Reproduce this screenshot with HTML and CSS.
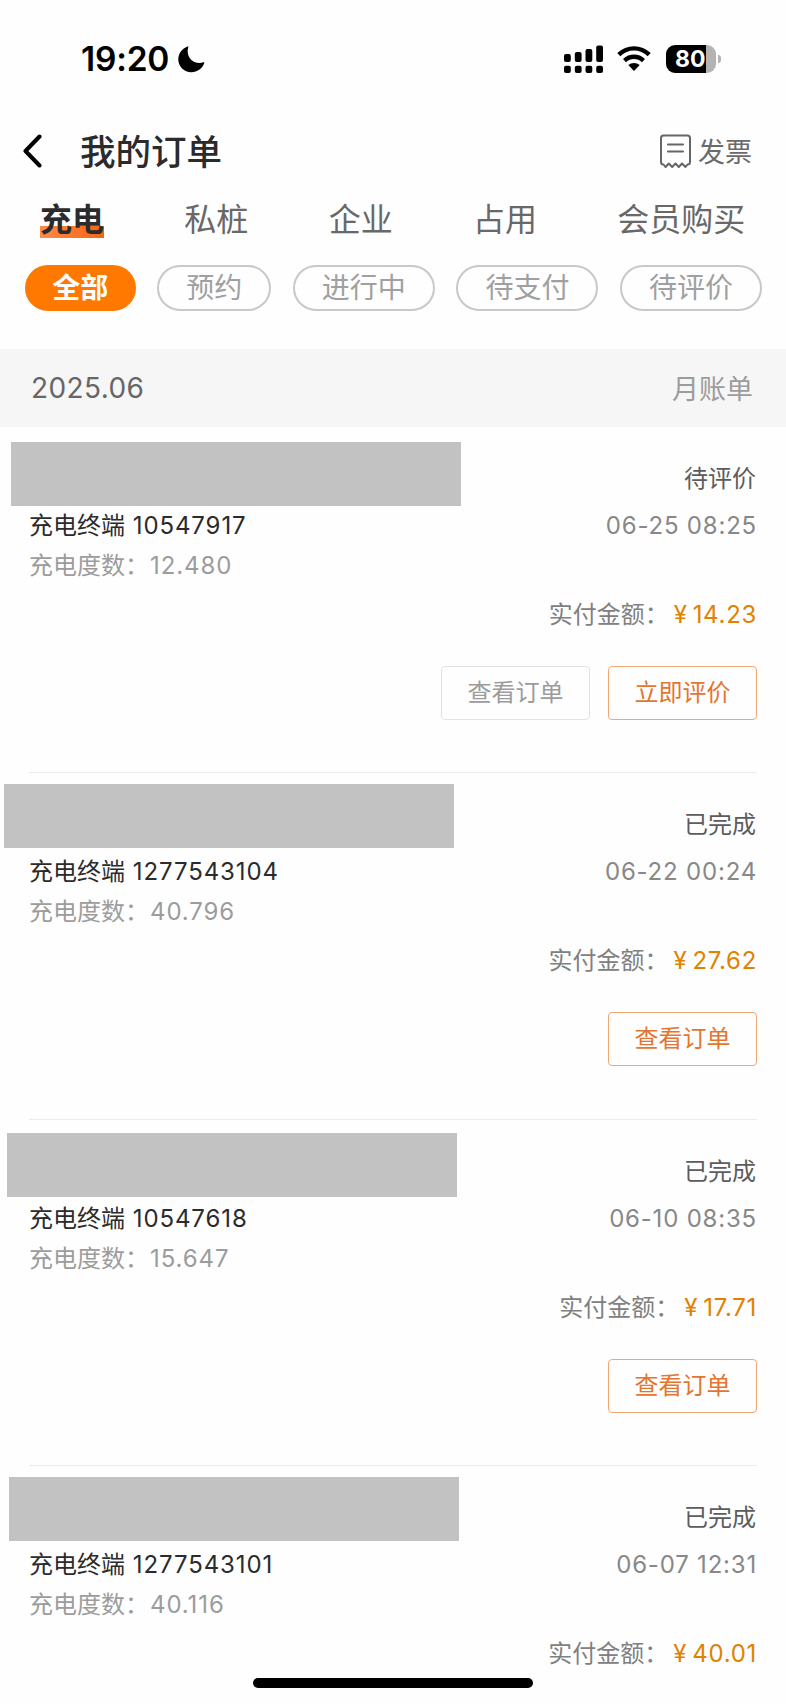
FILE: index.html
```html
<!DOCTYPE html>
<html lang="zh-CN">
<head>
    <meta charset="UTF-8">
    <meta name="viewport" content="width=device-width, initial-scale=1.0">
    <title>我的订单</title>
    <link rel="stylesheet" href="styles.css">
</head>
<body>

    <div class="status-bar">
        <span class="time">19:20</span>
        <svg class="moon" width="27" height="27" viewBox="0 0 27 27">
            <path d="M9.6 .4C9.9 0 10.5.2 10.3.9C7.2 10.8 15.5 19.2 25.4 16.3C26.2 16.1 26.5 16.6 26.2 17.3C24.2 22.8 19.2 26.3 13.4 26.3C6 26.3.3 20.6.3 13.3C.3 7.4 4 2.400 9.6.4Z"/>
        </svg>
        <svg class="signal" width="40" height="29" viewBox="0 0 40 29">
            <rect x="0" y="9" width="6.800" height="8" rx="2"/>
            <rect x="10.800" y="7" width="6.800" height="10" rx="2"/>
            <rect x="21.500" y="4" width="6.800" height="13" rx="2"/>
            <rect x="32.200" y="0.500" width="6.800" height="16.500" rx="2"/>
            <rect x="0" y="20.800" width="6.800" height="7.200" rx="2"/>
            <rect x="10.800" y="20.800" width="6.800" height="7.200" rx="2"/>
            <rect x="21.500" y="20.800" width="6.800" height="7.200" rx="2"/>
            <rect x="32.200" y="20.800" width="6.800" height="7.200" rx="2"/>
        </svg>
        <svg class="wifi" width="34" height="26" viewBox="0 0 34 26">
            <path d="M1.800 8.700C10.500.3 23.500.3 32.200 8.700" fill="none" stroke="#000" stroke-width="4.400"/>
            <path d="M7.500 14.600C13 9.500 21 9.500 26.500 14.600" fill="none" stroke="#000" stroke-width="4.400"/>
            <path d="M11.300 19C14.600 16.200 19.400 16.200 22.700 19L17.500 24.600Q17 25.100 16.500 24.600Z"/>
        </svg>
        <div class="battery"><span>80</span></div>
        <div class="battery-tip"></div>
    </div>

    <div class="nav">
        <svg class="back" width="20" height="34" viewBox="0 0 20 34">
            <path d="M16.500 2.500L2.500 17L16.500 31.500" fill="none" stroke="#000" stroke-width="4" stroke-linecap="round" stroke-linejoin="round"/>
        </svg>
        <h1>我的订单</h1>
        <svg class="invoice-icon" width="32" height="35" viewBox="0 0 32 35" fill="none" stroke="#666" stroke-width="2" stroke-linejoin="round" stroke-linecap="round">
            <path d="M3.500 30.500Q1 30.500 1 28V4Q1 1.500 3.500 1.500H27.500Q30 1.500 30 4V28Q30 30.500 27.500 30.500L25.500 33L22 29.500L18.800 33L15.500 29.500L12.200 33L8.800 29.500L5.500 33Z"/>
            <path d="M8 10.500H23M8 17.500H23" stroke-width="2.200"/>
        </svg>
        <span class="invoice">发票</span>
    </div>

    <div class="tabs">
        <span class="tab active">充电</span>
        <span class="tab">私桩</span>
        <span class="tab">企业</span>
        <span class="tab">占用</span>
        <span class="tab">会员购买</span>
    </div>

    <div class="filters">
        <span class="pill active">全部</span>
        <span class="pill">预约</span>
        <span class="pill">进行中</span>
        <span class="pill">待支付</span>
        <span class="pill">待评价</span>
    </div>

    <div class="month">
        <span class="month-date">2025.06</span>
        <span class="month-bill">月账单</span>
    </div>

    <div class="orders">
        <div class="order first">
            <div class="order-head"><div class="station"></div><span class="state">待评价</span></div>
            <div class="row terminal"><span>充电终端 <b>10547917</b></span><span class="date">06-25 08:25</span></div>
            <div class="degrees">充电度数：<b>12.480</b></div>
            <div class="amount">实付金额：<span class="price"><i>¥</i>14.23</span></div>
            <div class="buttons"><span class="btn">查看订单</span><span class="btn orange">立即评价</span></div>
        </div>
        <div class="order second">
            <div class="order-head"><div class="station"></div><span class="state">已完成</span></div>
            <div class="row terminal"><span>充电终端 <b>1277543104</b></span><span class="date">06-22 00:24</span></div>
            <div class="degrees">充电度数：<b>40.796</b></div>
            <div class="amount">实付金额：<span class="price"><i>¥</i>27.62</span></div>
            <div class="buttons"><span class="btn orange">查看订单</span></div>
        </div>
        <div class="order third">
            <div class="order-head"><div class="station"></div><span class="state">已完成</span></div>
            <div class="row terminal"><span>充电终端 <b>10547618</b></span><span class="date">06-10 08:35</span></div>
            <div class="degrees">充电度数：<b>15.647</b></div>
            <div class="amount">实付金额：<span class="price"><i>¥</i>17.71</span></div>
            <div class="buttons"><span class="btn orange">查看订单</span></div>
        </div>
        <div class="order fourth">
            <div class="order-head"><div class="station"></div><span class="state">已完成</span></div>
            <div class="row terminal"><span>充电终端 <b>1277543101</b></span><span class="date">06-07 12:31</span></div>
            <div class="degrees">充电度数：<b>40.116</b></div>
            <div class="amount">实付金额：<span class="price"><i>¥</i>40.01</span></div>
        </div>
    </div>

    <div class="home-bar"></div>

</body>
</html>
```
FILE: styles.css
```css
* {
    box-sizing: border-box;
}
body {
    margin: 0;
    height: 1704px;
    position: relative;
    overflow: hidden;
    background: #fefefe;
    color: #2b2b2b;
    font-family: Inter, "Noto Sans CJK SC", sans-serif;
    font-size: 24px;
}
svg {
    display: block;
    flex: none;
}
b, i {
    font-weight: normal;
    font-style: normal;
}
b {
    margin-left: 1px;
    letter-spacing: 0.9px;
}

/* phone status bar */
.status-bar {
    display: flex;
    align-items: center;
    height: 118px;
    padding: 0 65px 0 81px;
    color: #000;
}
.time {
    width: 97px;
    font-size: 33.500px;
    font-weight: 600;
    letter-spacing: -0.2px;
    line-height: 40px;
    padding-bottom: 1px;
}
.signal {
    margin-left: auto;
    margin-right: 13px;
}
.wifi {
    margin-right: 15px;
}
.battery {
    width: 50px;
    height: 28px;
    border-radius: 9px;
    background: linear-gradient(to right, #000 40px, #b3b3b3 40px);
    color: #fff;
    font-size: 23px;
    font-weight: 700;
    line-height: 28px;
    padding-left: 9px;
}
.battery-tip {
    width: 3px;
    height: 8px;
    margin-left: 2px;
    border-radius: 0 4px 4px 0;
    background: #b3b3b3;
}

/* title row */
.nav {
    display: flex;
    align-items: center;
    height: 66px;
    padding: 0 34px 0 23px;
}
h1 {
    margin: 0 auto 0 37px;
    padding-top: 3px;
    font-size: 35.5px;
    font-weight: 500;
    line-height: 63px;
}
.invoice {
    margin-left: 6px;
    padding-bottom: 2px;
    font-size: 27px;
    color: #6b6b6b;
}

.tabs {
    display: flex;
    gap: 80.300px;
    height: 70px;
    padding: 0 40px;
    align-items: center;
    font-size: 32px;
    line-height: 36px;
    color: #686868;
}
.tab {
    padding-top: 2px;
    white-space: nowrap;
}
.tab.active {
    color: #2b2b2b;
    font-weight: 700;
    background: linear-gradient(to right, #ff8a48, #f56414) 0 100% / 100% 12px no-repeat;
}

.filters {
    display: flex;
    gap: 21.600px;
    height: 95px;
    padding: 11px 23px 0 25px;
}
.pill {
    height: 46px;
    padding: 0 27px;
    border: 2px solid #c8c8c8;
    border-radius: 23px;
    font-size: 28px;
    line-height: 43px;
    color: #a0a0a0;
    white-space: nowrap;
}
.pill.active {
    padding: 0 25.300px;
    border-color: #ff7900;
    background: #ff7900;
    color: #fff;
    font-weight: 700;
}

.month {
    display: flex;
    justify-content: space-between;
    align-items: center;
    height: 78px;
    padding: 0 33px 0 31px;
    background: #f6f6f6;
}
.month-date {
    font-size: 28px;
    letter-spacing: 0.4px;
    color: #666;
}
.month-bill {
    padding-bottom: 2px;
    font-size: 27px;
    color: #9c9c9c;
}

/* order list */
.order {
    height: 346.4px;
    margin: 0 29px;
    border-bottom: 1px solid #ececec;
}
.order:last-child {
    height: auto;
    border-bottom: 0;
}
.order-head {
    display: flex;
    justify-content: space-between;
    height: 76px;
}
.station {
    width: 450px;
    height: 64px;
    background: #c2c2c2;
}
.first .station {
    margin: 15px 0 0 -18.500px;
}
.second .station {
    margin: 10.500px 0 0 -25px;
}
.third .station {
    margin: 13.500px 0 0 -22px;
}
.fourth .station {
    margin: 11px 0 0 -20px;
}
.state {
    padding: 32px 1px 0 0;
    line-height: 40px;
    color: #5c5c5c;
}
.row {
    display: flex;
    justify-content: space-between;
    line-height: 45px;
}
.date {
    letter-spacing: 0.8px;
    color: #888;
}
.degrees {
    line-height: 36px;
    color: #9c9c9c;
}
.amount {
    margin-top: 11px;
    line-height: 40px;
    text-align: right;
    color: #808080;
}
.price {
    margin-left: 5px;
    letter-spacing: 0.7px;
    color: #e08200;
}
.price i {
    margin-right: 5px;
}
.buttons {
    display: flex;
    justify-content: flex-end;
    gap: 18px;
    margin-top: 31px;
}
.btn {
    width: 149px;
    height: 54px;
    border: 1px solid #e2e2e2;
    border-radius: 4px;
    line-height: 51px;
    text-align: center;
    color: #9c9c9c;
}
.btn.orange {
    border-color: #efa777;
    color: #e4752f;
}

.home-bar {
    position: absolute;
    left: 253px;
    bottom: 16px;
    width: 280px;
    height: 10px;
    border-radius: 5px;
    background: #000;
}
```
